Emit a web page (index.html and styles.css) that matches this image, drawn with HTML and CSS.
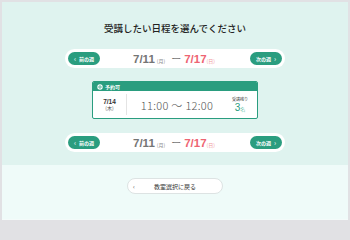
FILE: index.html
```html
<!DOCTYPE html>
<html lang="ja">
<head>
<meta charset="utf-8">
<link rel="stylesheet" href="styles.css">
</head>
<body>
<div class="page">
  <section class="top">
    <h1 class="title">受講したい日程を選んでください</h1>
    <div class="week">
      <button class="wbtn"><span class="arr">‹</span>前の週</button>
      <div class="range"><span class="d">7/11</span><span class="dw">(月)</span><span class="dash">ー</span><span class="d red">7/17</span><span class="dw red">(日)</span></div>
      <button class="wbtn">次の週<span class="arr">›</span></button>
    </div>
    <div class="card">
      <div class="card-head"><svg class="ico" viewBox="0 0 10 10" width="6" height="6"><circle cx="5" cy="5" r="4.5" fill="#fff"/><circle cx="5" cy="5" r="2" fill="none" stroke="#2a9d7f" stroke-width="1.3"/></svg>予約可</div>
      <div class="card-body">
        <div class="cdate"><span class="cd">7/14</span><span class="cw">(木)</span></div>
        <div class="ctime">11:00 ～ 12:00</div>
        <div class="cseat"><span class="cl">受講残り</span><span class="cn">3<small>名</small></span></div>
      </div>
    </div>
    <div class="week">
      <button class="wbtn"><span class="arr">‹</span>前の週</button>
      <div class="range"><span class="d">7/11</span><span class="dw">(月)</span><span class="dash">ー</span><span class="d red">7/17</span><span class="dw red">(日)</span></div>
      <button class="wbtn">次の週<span class="arr">›</span></button>
    </div>
  </section>
  <section class="bottom">
    <button class="back"><span class="barr">‹</span><span class="btxt">教室選択に戻る</span></button>
  </section>
</div>
</body>
</html>
```
FILE: styles.css
```css
* { box-sizing: border-box; }
html, body { margin: 0; padding: 0; }
body {
  background: #e1e1e4;
  width: 350px;
  height: 240px;
  padding: 2px;
  font-family: "Liberation Sans", "Noto Sans CJK JP", sans-serif;
}
.page { width: 346px; }
.top {
  background: #dff3ef;
  height: 163px;
  padding-top: 19px;
  display: flex;
  flex-direction: column;
  align-items: center;
}
.title {
  margin: 0;
  font-family: "Noto Sans CJK JP", sans-serif;
  font-size: 9.5px;
  line-height: 14px;
  font-weight: 500;
  color: #222;
}
.week {
  margin-top: 14px;
  width: 220px;
  height: 19px;
  background: #fff;
  border-radius: 10px;
  display: flex;
  align-items: center;
  justify-content: space-between;
  padding: 0 3px;
}
.wbtn {
  border: 0;
  margin: 0;
  background: #2a9d7f;
  color: #fff;
  height: 13px;
  width: 32px;
  border-radius: 7px;
  font-family: "Noto Sans CJK JP", sans-serif;
  font-size: 5px;
  font-weight: 700;
  display: flex;
  align-items: center;
  justify-content: center;
  gap: 3px;
  padding: 0;
}
.arr { font-size: 7px; line-height: 1; font-weight: 400; }
.range {
  display: flex;
  align-items: baseline;
  color: #777;
  padding-right: 2px;
}
.d { font-size: 11.5px; font-weight: 700; color: #757575; }
.dw { font-size: 5px; color: #888; margin-left: 2px; font-family: "Noto Sans CJK JP", sans-serif; }
.dash { font-size: 10px; margin: 0 3px 0 6px; color: #757575; font-family: "Noto Sans CJK JP", sans-serif; }
.red { color: #ee6472; }
.dw.red { color: #ef97a0; margin-left: 0; }
.card {
  margin-top: 13px;
  width: 166px;
  height: 38px;
  background: #fff;
  border: 1px solid #2a9d7f;
  border-radius: 2px;
  overflow: hidden;
  display: flex;
  flex-direction: column;
}
.card-head {
  background: #2a9d7f;
  height: 9px;
  color: #fff;
  font-family: "Noto Sans CJK JP", sans-serif;
  font-size: 5px;
  font-weight: 700;
  display: flex;
  align-items: center;
  gap: 2px;
  padding-left: 4px;
}
.ico { display: block; }
.card-body {
  flex: 1;
  display: flex;
  align-items: center;
  padding: 3px 0;
}
.cdate {
  width: 34px;
  height: 100%;
  border-right: 1px solid #e4e4e4;
  display: flex;
  flex-direction: column;
  align-items: center;
  justify-content: center;
  line-height: 1.1;
}
.cd { font-size: 6.5px; font-weight: 700; color: #333; }
.cw { font-size: 5px; color: #555; font-family: "Noto Sans CJK JP", sans-serif; }
.ctime {
  flex: 1;
  text-align: center;
  font-family: "Noto Sans CJK JP", sans-serif;
  font-size: 11px;
  font-weight: 300;
  color: #555;
  letter-spacing: 0.3px;
}
.cseat {
  width: 30px;
  display: flex;
  flex-direction: column;
  align-items: center;
  line-height: 1;
  padding-right: 4px;
}
.cl { font-size: 4px; color: #444; font-family: "Noto Sans CJK JP", sans-serif; }
.cn { font-size: 10px; color: #2a9d7f; margin-top: 2px; }
.cn small { font-size: 5px; color: #6cbfa9; font-family: "Noto Sans CJK JP", sans-serif; }
.bottom {
  background: #effbf9;
  height: 55px;
  border-bottom: 1px solid #f4fbfa;
  display: flex;
  justify-content: center;
  padding-top: 13px;
}
.back {
  margin: 0;
  width: 96px;
  height: 16px;
  background: #fff;
  border: 1px solid #dde3e3;
  border-radius: 8px;
  display: flex;
  align-items: center;
  padding: 0 0 0 5px;
  font-family: "Noto Sans CJK JP", sans-serif;
  color: #333;
}
.barr { font-size: 6px; color: #555; width: 10px; text-align: left; }
.btxt { font-size: 6px; margin-left: 11px; }
```
